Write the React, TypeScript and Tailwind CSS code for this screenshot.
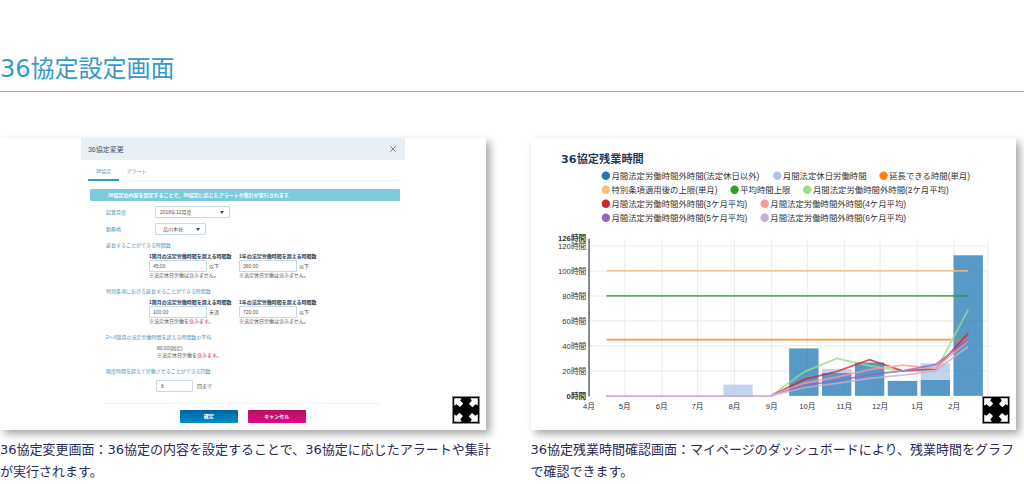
import type { ReactNode } from "react";

const YELLOW = "#ffbb78";

/* Chart data: values in hours, one slot per month */
const MONTHS = [
  { label: "4月", x: 83 },
  { label: "5月", x: 134 },
  { label: "6月", x: 187 },
  { label: "7月", x: 238 },
  { label: "8月", x: 291 },
  { label: "9月", x: 344 },
  { label: "10月", x: 395 },
  { label: "11月", x: 448 },
  { label: "12月", x: 499 },
  { label: "1月", x: 552 },
  { label: "2月", x: 605 },
  { label: "3月", x: 653 },
];

const BARS = [
  { slot: 4, base: 0, holiday: 9 },
  { slot: 6, base: 38, holiday: 0 },
  { slot: 7, base: 18.6, holiday: 3 },
  { slot: 8, base: 26.7, holiday: 0 },
  { slot: 9, base: 12, holiday: 0 },
  { slot: 10, base: 13, holiday: 13 },
  { slot: 11, base: 112.5, holiday: 0 },
];

const LIMITS = [
  { value: 100, color: YELLOW },
  { value: 80, color: "#2ca02c" },
  { value: 45, color: "#ff7f0e" },
];

const AVERAGES = [
  { color: "#98df8a", values: [19, 30, 24, 20, 19.5, 69] },
  { color: "#d62728", values: [13, 19.5, 29, 20, 21.5, 50] },
  { color: "#ff9896", values: [10, 15, 21, 24.5, 22, 44] },
  { color: "#9467bd", values: [8.5, 12, 17, 20, 25, 45] },
  { color: "#c5b0d5", values: [6.5, 10, 14, 16.5, 20, 39.5] },
];

const LEGEND = [
  { x: 107, y: 54, color: "#1f77b4", text: "月間法定労働時間外時間(法定休日以外)" },
  { x: 352, y: 54, color: "#aec7e8", text: "月間法定休日労働時間" },
  { x: 504, y: 54, color: "#ff7f0e", text: "延長できる時間(単月)" },
  { x: 107, y: 74, color: YELLOW, text: "特別条項適用後の上限(単月)" },
  { x: 291, y: 74, color: "#2ca02c", text: "平均時間上限" },
  { x: 395, y: 74, color: "#98df8a", text: "月間法定労働時間外時間(2ケ月平均)" },
  { x: 107, y: 94, color: "#d62728", text: "月間法定労働時間外時間(3ケ月平均)" },
  { x: 334, y: 94, color: "#ff9896", text: "月間法定労働時間外時間(4ケ月平均)" },
  { x: 107, y: 114, color: "#9467bd", text: "月間法定労働時間外時間(5ケ月平均)" },
  { x: 334, y: 114, color: "#c5b0d5", text: "月間法定労働時間外時間(6ケ月平均)" },
];

const hourY = (h: number) => 368.6 - h * 1.786;
const slotX = (i: number) => 108 + i * 47;

export default function App() {
  return (
    <main className="bg-white pt-[53px] font-['DejaVu_Sans','Noto_Sans_CJK_JP',sans-serif]">
      <h2 className="border-b border-[#72b6da] pb-1.5 text-2xl leading-8 text-[#3599cc]">
        36協定設定画面
      </h2>

      <div className="mt-[46px] grid grid-cols-2 gap-[37px]">
        <Figure caption="36協定変更画面：36協定の内容を設定することで、36協定に応じたアラートや集計が実行されます。">
          <AgreementForm />
        </Figure>
        <Figure caption="36協定残業時間確認画面：マイページのダッシュボードにより、残業時間をグラフで確認できます。">
          <OvertimeChart />
        </Figure>
      </div>
    </main>
  );
}

function Figure({ caption, children }: { caption: string; children: ReactNode }) {
  return (
    <figure>
      <div className="relative mr-2 bg-white shadow-[4px_4px_8px_rgba(0,0,0,0.35)]">
        {children}
        <button type="button" aria-label="拡大" className="absolute right-1.5 bottom-1.5">
          <ExpandIcon />
        </button>
      </div>
      <figcaption className="mt-[9px] text-[13px] leading-[22px] text-[#2b2b55]">
        {caption}
      </figcaption>
    </figure>
  );
}

function ExpandIcon() {
  return (
    <svg viewBox="0 0 28 28" className="block size-7">
      <rect width="28" height="28" fill="#888" />
      <rect x="1" y="1" width="26" height="26" fill="#000" />
      {[0, 90, 180, 270].map((deg) => (
        <path
          key={deg}
          d="M2.2 2.2H9.6L8.2 4.4L11.2 7.6L8 11L4.6 8.2L2.2 9.8Z"
          fill="#fff"
          transform={`rotate(${deg} 14 14)`}
        />
      ))}
    </svg>
  );
}

/* Settings dialog */
function AgreementForm() {
  return (
    <form className="mx-auto w-2/3 font-['Liberation_Sans','Noto_Sans_CJK_JP',sans-serif] text-[5px] leading-[7px] text-[#555]">
      <div className="flex h-[22px] items-center justify-between bg-[#e8eff5] px-[7px]">
        <h3 className="text-[7px] text-[#4a5560]">36協定変更</h3>
        <button type="button" aria-label="閉じる" className="mr-px">
          <svg viewBox="0 0 8 8" className="block size-2" stroke="#667788" strokeWidth="0.9">
            <path d="M1.2 1.2L6.8 6.8M6.8 1.2L1.2 6.8" />
          </svg>
        </button>
      </div>

      <div className="mx-[7px] mt-[3px] flex h-[18px] border-b border-[#f1f3f5] text-[#4b93bd]">
        <button type="button" className="h-[18px] w-[31px] border-b-2 border-[#2f9ac8]">
          36協定
        </button>
        <button type="button" className="h-4 w-[35px]">
          アラート
        </button>
      </div>

      <p className="mt-2 mr-[5px] ml-[9px] h-3 rounded-[1px] bg-[#7bcbdc] pl-[18px] leading-3 font-bold text-white">
        36協定の内容を設定することで、36協定に応じたアラートや集計が実行されます。
      </p>

      <div className="px-[25px] pb-[7px]">
        <SelectRow id="month" label="起算月度" value="2018年12月度" wide />
        <SelectRow id="office" label="勤務地" value="品川本社" />

        <Section title="延長することができる時間数">
          <HourField id="month-limit" label="1箇月の法定労働時間を超える時間数" value="45:00" unit="以下">
            ※法定休日労働は含みません。
          </HourField>
          <HourField id="year-limit" label="1年の法定労働時間を超える時間数" value="360:00" unit="以下">
            ※法定休日労働は含みません。
          </HourField>
        </Section>

        <Section title="特別条項における延長することができる時間数">
          <HourField id="month-special" label="1箇月の法定労働時間を超える時間数" value="100:00" unit="未満">
            ※法定休日労働を<span className="text-[#cc2244]">含みます。</span>
          </HourField>
          <HourField id="year-special" label="1年の法定労働時間を超える時間数" value="720:00" unit="以下">
            ※法定休日労働は含みません。
          </HourField>
        </Section>

        <h4 className="mt-[9px] text-[#4b93bd]">2〜6箇月の法定労働時間を超える時間数の平均</h4>
        <p className="mt-1 ml-[51px]">
          80:00(固定)
          <br />
          ※法定休日労働を<span className="text-[#cc2244]">含みます。</span>
        </p>

        <label htmlFor="count" className="mt-[9px] block text-[#4b93bd]">
          限度時間を超えて労働させることができる回数
        </label>
        <div className="mt-[5px] ml-[50px] flex items-center gap-1">
          <input
            id="count"
            defaultValue="6"
            className="h-3 w-[37px] rounded-[1px] border border-[#c6dbe8] px-1"
          />
          回まで
        </div>

        <div className="mt-[11px] flex justify-center gap-2.5 border-t border-[#eef0f2] pt-1.5">
          <button
            type="submit"
            className="h-[13px] w-[58px] rounded-[1px] bg-linear-to-b from-[#0062a5] to-[#008fbf] font-bold text-white"
          >
            確定
          </button>
          <button
            type="button"
            className="h-[13px] w-[58px] rounded-[1px] bg-linear-to-b from-[#b3125c] to-[#e3058a] font-bold text-white"
          >
            キャンセル
          </button>
        </div>
      </div>
    </form>
  );
}

function SelectRow({
  id,
  label,
  value,
  wide,
}: {
  id: string;
  label: string;
  value: string;
  wide?: boolean;
}) {
  return (
    <div className="mt-[5px] flex h-3 items-center">
      <label htmlFor={id} className="w-[49px] text-[#4b93bd]">
        {label}
      </label>
      <div className={wide ? "relative w-[75px]" : "relative w-[51px]"}>
        <select
          id={id}
          className={`block h-3 w-full appearance-none rounded-[1px] border border-[#c6dbe8] bg-white ${
            wide ? "pl-1" : "pl-[7px]"
          }`}
        >
          <option>{value}</option>
        </select>
        <svg viewBox="0 0 4 3" className="absolute top-[5px] right-1.5 h-[3px] w-1" fill="#2d5878">
          <path d="M0 0H4L2 3Z" />
        </svg>
      </div>
    </div>
  );
}

function Section({ title, children }: { title: string; children: ReactNode }) {
  return (
    <fieldset className="mt-[9px] first-of-type:mt-[7px]">
      <legend className="text-[#4b93bd]">{title}</legend>
      <div className="mt-1 ml-[43px] flex gap-[5px]">{children}</div>
    </fieldset>
  );
}

function HourField({
  id,
  label,
  value,
  unit,
  children,
}: {
  id: string;
  label: string;
  value: string;
  unit: string;
  children: ReactNode;
}) {
  return (
    <div className="w-[85px] whitespace-nowrap">
      <label htmlFor={id} className="block font-bold text-[#2c3e55]">
        {label}
      </label>
      <div className="flex items-center gap-0.5">
        <input
          id={id}
          defaultValue={value}
          className="h-3 w-[58px] rounded-[1px] border border-[#c6dbe8] px-[3px]"
        />
        {unit}
      </div>
      <p>{children}</p>
    </div>
  );
}

/* Overtime chart */
function OvertimeChart() {
  return (
    <svg
      viewBox="0 0 694 417"
      role="img"
      aria-label="36協定残業時間"
      className="block w-full font-['Liberation_Sans','Noto_Sans_CJK_JP',sans-serif]"
    >
      <text x="43" y="36" fontSize="16" fill="#1f3b57" className="font-['DejaVu_Sans','Noto_Sans_CJK_JP',sans-serif] font-bold">
        36協定残業時間
      </text>

      {LEGEND.map((item) => (
        <g key={item.text}>
          <circle cx={item.x} cy={item.y} r="6" fill={item.color} />
          <text x={item.x + 8} y={item.y + 4} fontSize="12" fill="#333">
            {item.text}
          </text>
        </g>
      ))}

      {/* Grid */}
      <g stroke="#ececec" strokeWidth="1.5">
        {[20, 40, 60, 80, 100, 120].map((h) => (
          <line key={h} x1="83" x2="653" y1={hourY(h)} y2={hourY(h)} />
        ))}
        {MONTHS.map((m) => (
          <line key={m.label} x1={m.x} x2={m.x} y1="144" y2="368" />
        ))}
      </g>
      <line x1="83" x2="83" y1="144" y2="369" stroke="#777b80" strokeWidth="2.5" />

      {/* Axis labels */}
      <g fontSize="11" fill="#333">
        {[0, 20, 40, 60, 80, 100, 120, 126].map((h) => (
          <text
            key={h}
            x="79"
            y={hourY(h) + 4}
            textAnchor="end"
            fontWeight={h === 0 || h === 126 ? 700 : 400}
          >
            {h}時間
          </text>
        ))}
        {MONTHS.map((m) => (
          <text key={m.label} x={m.x} y="387" textAnchor="middle">
            {m.label}
          </text>
        ))}
      </g>

      {BARS.map((bar) => (
        <g key={bar.slot} opacity="0.75">
          <rect
            x={slotX(bar.slot) - 21}
            y={hourY(bar.base)}
            width="42"
            height={bar.base * 1.786}
            fill="#1f77b4"
          />
          <rect
            x={slotX(bar.slot) - 21}
            y={hourY(bar.base + bar.holiday)}
            width="42"
            height={bar.holiday * 1.786}
            fill="#aec7e8"
          />
        </g>
      ))}

      <g fill="none" strokeWidth="2.5" opacity="0.8">
        {LIMITS.map((l) => (
          <line
            key={l.value}
            x1={slotX(0)}
            x2={slotX(11)}
            y1={hourY(l.value)}
            y2={hourY(l.value)}
            stroke={l.color}
          />
        ))}
        {AVERAGES.map((s) => (
          <polyline
            key={s.color}
            stroke={s.color}
            points={[0, 0, 0, 0, 0, 0, ...s.values]
              .map((v, i) => `${slotX(i)},${hourY(v)}`)
              .join(" ")}
          />
        ))}
      </g>
    </svg>
  );
}
